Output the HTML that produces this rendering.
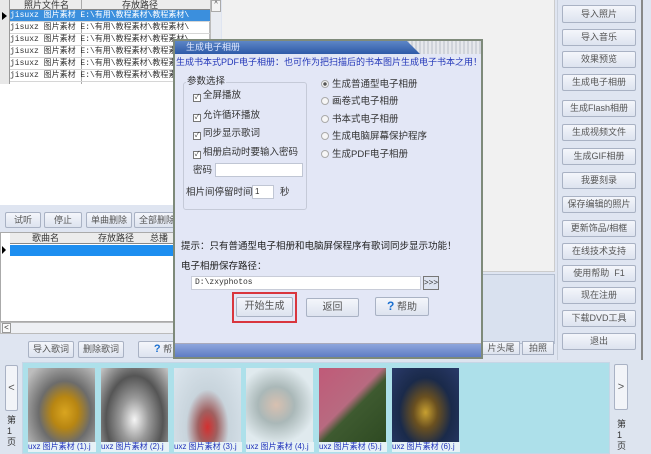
<!DOCTYPE html>
<html><head><meta charset="utf-8"><style>
*{margin:0;padding:0;box-sizing:border-box}
body{width:651px;height:454px;overflow:hidden;background:#dfe5f1;font-family:"Liberation Sans","Noto Sans CJK SC",sans-serif;font-size:9px;color:#333;position:relative}
.a{position:absolute}
.btn{position:absolute;background:linear-gradient(#f4f6fb,#dde3ef);border:1px solid #a9b2c4;border-radius:2px;text-align:center;color:#555;font-size:9px}
.row{position:absolute;left:10px;width:200px;height:12px;border-bottom:1px solid #d6d6d6;font-family:"Liberation Mono","Noto Sans CJK SC",monospace;font-size:8px;line-height:12px;color:#333;white-space:nowrap;overflow:hidden}
.cb{display:inline-block;width:8px;height:8px;border:1px solid #777;background:#fff;margin-right:2px;vertical-align:-1px;font-size:7px;line-height:6px;text-align:center}
.rd{display:inline-block;width:8px;height:8px;border:1px solid #aaa;border-radius:50%;background:#f6f6f6;margin-right:3px;vertical-align:-1px}
.th{position:absolute;top:368px;width:67px;height:74px}
.lb{position:absolute;top:442px;width:68px;height:10px;font-size:8px;color:#2233bb;line-height:10px;white-space:nowrap;overflow:hidden;background:#e6f2f6}
.d{font-size:9.5px;line-height:12px;white-space:nowrap}
</style></head><body>
<div class="a" style="left:0;top:0;width:210px;height:205px;background:#fff;border-right:1px solid #bbb"></div>
<div class="a" style="left:0;top:0;width:10px;height:84px;background:#e8e8e8;border-right:1px solid #999"></div>
<div class="a" style="left:10px;top:0;width:200px;height:10px;background:#ececec;border-bottom:1px solid #888;font-size:9px;line-height:10px;color:#333"><span class="a" style="left:14px">照片文件名</span><span class="a" style="left:112px">存放路径</span></div>
<div class="a" style="left:81px;top:0;width:1px;height:84px;background:#aaa"></div>
<div class="row" style="top:10px;background:#3b8fdd;color:#fff">jisuxz 图片素材 E:\有用\教程素材\教程素材\</div>
<div class="row" style="top:22px">jisuxz 图片素材 E:\有用\教程素材\教程素材\</div>
<div class="row" style="top:34px">jisuxz 图片素材 E:\有用\教程素材\教程素材\</div>
<div class="row" style="top:46px">jisuxz 图片素材 E:\有用\教程素材\教程素材\</div>
<div class="row" style="top:58px">jisuxz 图片素材 E:\有用\教程素材\教程素材\</div>
<div class="row" style="top:70px">jisuxz 图片素材 E:\有用\教程素材\教程素材\</div>
<div class="a" style="left:2px;top:12px;border-left:5px solid #000;border-top:4px solid transparent;border-bottom:4px solid transparent"></div>
<div class="a" style="left:210px;top:0;width:11px;height:205px;background:#e9ecf2;border-left:1px solid #bbb"></div>
<div class="a" style="left:211px;top:0;width:10px;height:12px;background:#f4f4f4;border:1px solid #aaa;font-size:7px;text-align:center">^</div>
<div class="a" style="left:222px;top:0;width:333px;height:272px;background:#f1f1f1;border-right:1px solid #ccc;border-bottom:1px solid #ccc"></div>
<div class="btn" style="left:5px;top:212px;width:36px;height:16px;line-height:14px">试听</div>
<div class="btn" style="left:44px;top:212px;width:38px;height:16px;line-height:14px">停止</div>
<div class="btn" style="left:86px;top:212px;width:46px;height:16px;line-height:14px">单曲删除</div>
<div class="btn" style="left:134px;top:212px;width:46px;height:16px;line-height:14px">全部删除</div>
<div class="a" style="left:0;top:232px;width:200px;height:90px;background:#fff;border:1px solid #aaa"></div>
<div class="a" style="left:10px;top:233px;width:190px;height:11px;background:#ececec;border-bottom:1px solid #888;line-height:11px"><span class="a" style="left:22px">歌曲名</span><span class="a" style="left:88px">存放路径</span><span class="a" style="left:140px">总播</span></div>
<div class="a" style="left:10px;top:245px;width:190px;height:11px;background:#1d8ef0"></div>
<div class="a" style="left:2px;top:246px;border-left:4px solid #000;border-top:4px solid transparent;border-bottom:4px solid transparent"></div>
<div class="a" style="left:0;top:322px;width:200px;height:12px;background:#eef0f4;border:1px solid #bbb"></div>
<div class="a" style="left:2px;top:323px;width:9px;height:10px;background:#fafafa;border:1px solid #999;font-size:8px;line-height:8px;text-align:center">&lt;</div>
<div class="btn" style="left:28px;top:341px;width:46px;height:17px;line-height:15px">导入歌词</div>
<div class="btn" style="left:78px;top:341px;width:46px;height:17px;line-height:15px">删除歌词</div>
<div class="btn" style="left:138px;top:341px;width:50px;height:17px;line-height:15px"><b style="color:#1a6fd0;font-size:11px">?</b> 帮</div>
<div class="a" style="left:385px;top:274px;width:170px;height:70px;background:#d9e1ef;border:1px solid #b5bfd0"></div>
<div class="btn" style="left:482px;top:341px;width:38px;height:14px;line-height:12px;border-radius:0">片头尾</div>
<div class="btn" style="left:522px;top:341px;width:32px;height:14px;line-height:12px;border-radius:0">拍照</div>
<div class="a" style="left:557px;top:0;width:86px;height:360px;border-left:1px solid #c9d0dc;border-right:2px solid #888"></div>
<div class="btn" style="left:562px;top:5px;width:74px;height:18px;line-height:16px">导入照片</div>
<div class="btn" style="left:562px;top:29px;width:74px;height:17px;line-height:15px">导入音乐</div>
<div class="btn" style="left:562px;top:51px;width:74px;height:17px;line-height:15px">效果预览</div>
<div class="btn" style="left:562px;top:74px;width:74px;height:17px;line-height:15px">生成电子相册</div>
<div class="btn" style="left:562px;top:100px;width:74px;height:17px;line-height:15px">生成Flash相册</div>
<div class="btn" style="left:562px;top:124px;width:74px;height:17px;line-height:15px">生成视频文件</div>
<div class="btn" style="left:562px;top:148px;width:74px;height:17px;line-height:15px">生成GIF相册</div>
<div class="btn" style="left:562px;top:172px;width:74px;height:17px;line-height:15px">我要刻录</div>
<div class="btn" style="left:562px;top:196px;width:74px;height:17px;line-height:15px">保存编辑的照片</div>
<div class="btn" style="left:562px;top:220px;width:74px;height:17px;line-height:15px">更新饰品/相框</div>
<div class="btn" style="left:562px;top:243px;width:74px;height:17px;line-height:15px">在线技术支持</div>
<div class="btn" style="left:562px;top:265px;width:74px;height:17px;line-height:15px">使用帮助&nbsp; F1</div>
<div class="btn" style="left:562px;top:287px;width:74px;height:17px;line-height:15px">现在注册</div>
<div class="btn" style="left:562px;top:310px;width:74px;height:17px;line-height:15px">下载DVD工具</div>
<div class="btn" style="left:562px;top:333px;width:74px;height:17px;line-height:15px">退出</div>
<div class="a" style="left:0;top:360px;width:651px;height:94px;background:#dde4ef"></div>
<div class="a" style="left:22px;top:362px;width:588px;height:92px;background:#ade0ea;border:1px solid #c6d6e6"></div>
<div class="btn" style="left:5px;top:365px;width:13px;height:46px;line-height:44px;font-size:11px;background:#f2f4f8">&lt;</div>
<div class="a" style="left:7px;top:415px;width:10px;font-size:9px;line-height:11px">第<br>1<br>页</div>
<div class="btn" style="left:614px;top:364px;width:14px;height:46px;line-height:44px;font-size:11px;background:#f2f4f8">&gt;</div>
<div class="a" style="left:617px;top:419px;width:10px;font-size:9px;line-height:11px">第<br>1<br>页</div>
<div class="th" style="left:28px;background:radial-gradient(ellipse at 55% 60%,#d9a520 0,#b88612 25%,#6c6c6c 50%,#bdbdbd 90%)"></div>
<div class="th" style="left:101px;background:radial-gradient(ellipse at 50% 70%,#f5f5f5 0,#999 30%,#555 60%,#c8c8c8 100%)"></div>
<div class="th" style="left:174px;background:radial-gradient(ellipse at 50% 80%,#d33030 0,#a06060 20%,#c8d4dc 45%,#dce6ee 100%)"></div>
<div class="th" style="left:246px;background:radial-gradient(ellipse at 45% 50%,#d8c0b0 0,#aab8b8 35%,#e0eaee 75%)"></div>
<div class="th" style="left:319px;background:linear-gradient(135deg,#c05a78 0,#b86a80 45%,#3e5a30 55%,#2e4a22 100%)"></div>
<div class="th" style="left:392px;background:radial-gradient(ellipse at 50% 60%,#c8a030 0,#6a5020 25%,#1a2a4a 55%,#2a3a6a 100%)"></div>
<div class="lb" style="left:28px">uxz 图片素材 (1).j</div>
<div class="lb" style="left:101px">uxz 图片素材 (2).j</div>
<div class="lb" style="left:174px">uxz 图片素材 (3).j</div>
<div class="lb" style="left:246px">uxz 图片素材 (4).j</div>
<div class="lb" style="left:319px">uxz 图片素材 (5).j</div>
<div class="lb" style="left:392px">uxz 图片素材 (6).j</div>
<div class="a" style="left:173px;top:39px;width:310px;height:320px;background:#e3e7f6;border:2px solid #7e8a7a"></div>
<div class="a" style="left:175px;top:41px;width:306px;height:13px;background:repeating-linear-gradient(90deg,#cfd3da 0 2px,#e6e8ec 2px 4px)"></div>
<div class="a" style="left:175px;top:41px;width:245px;height:13px;background:linear-gradient(#5d86c6,#2e5aa8);clip-path:polygon(0 0,232px 0,245px 100%,0 100%)"></div>
<div class="a" style="left:186px;top:42px;color:#dfe8ff;font-size:9px;line-height:11px">生成电子相册</div>
<div class="a" style="left:176px;top:56px;color:#2236b8;font-size:9px;line-height:12px;white-space:nowrap">生成书本式PDF电子相册：也可作为把扫描后的书本图片生成电子书本之用！</div>
<div class="a" style="left:183px;top:82px;width:124px;height:128px;border:1px solid #c5cad8;border-radius:3px"></div>
<div class="a d" style="left:186px;top:76px;background:#e3e7f6;padding:0 1px">参数选择</div>
<div class="a d" style="left:193px;top:90px"><span class="cb">✓</span>全屏播放</div>
<div class="a d" style="left:193px;top:110px"><span class="cb">✓</span>允许循环播放</div>
<div class="a d" style="left:193px;top:128px"><span class="cb">✓</span>同步显示歌词</div>
<div class="a d" style="left:193px;top:147px"><span class="cb">✓</span>相册启动时要输入密码</div>
<div class="a d" style="left:193px;top:165px">密码</div>
<div class="a" style="left:215px;top:163px;width:88px;height:14px;background:#fff;border:1px solid #c0c6d4"></div>
<div class="a d" style="left:186px;top:187px">相片间停留时间</div>
<div class="a" style="left:252px;top:185px;width:22px;height:14px;background:#fff;border:1px solid #c0c6d4;font-size:8px;padding-left:2px;line-height:12px">1</div>
<div class="a d" style="left:280px;top:187px">秒</div>
<div class="a d" style="left:321px;top:79px"><span class="rd" style="background:radial-gradient(#555 0 1.5px,#f6f6f6 2px)"></span>生成普通型电子相册</div>
<div class="a d" style="left:321px;top:96px"><span class="rd"></span>画卷式电子相册</div>
<div class="a d" style="left:321px;top:114px"><span class="rd"></span>书本式电子相册</div>
<div class="a d" style="left:321px;top:131px"><span class="rd"></span>生成电脑屏幕保护程序</div>
<div class="a d" style="left:321px;top:149px"><span class="rd"></span>生成PDF电子相册</div>
<div class="a d" style="left:181px;top:241px;color:#222">提示：只有普通型电子相册和电脑屏保程序有歌词同步显示功能！</div>
<div class="a d" style="left:181px;top:261px;color:#222">电子相册保存路径：</div>
<div class="a" style="left:191px;top:276px;width:230px;height:14px;background:#fff;border:1px solid #c8ccd8;font-family:'Liberation Mono',monospace;font-size:8px;line-height:12px;padding-left:3px">D:\zxyphotos</div>
<div class="a" style="left:423px;top:276px;width:16px;height:14px;background:#dde3f0;border:1px solid #777;font-size:8px;line-height:12px;text-align:center;color:#333">&gt;&gt;&gt;</div>
<div class="a" style="left:232px;top:292px;width:65px;height:31px;border:2px solid #d9363e"></div>
<div class="btn" style="left:236px;top:297px;width:57px;height:20px;line-height:18px;font-size:10px">开始生成</div>
<div class="btn" style="left:306px;top:298px;width:53px;height:19px;line-height:17px;font-size:10px">返回</div>
<div class="btn" style="left:375px;top:297px;width:54px;height:19px;line-height:17px;font-size:10px"><b style="color:#1a6fd0;font-size:12px">?</b> 帮助</div>
<div class="a" style="left:175px;top:343px;width:306px;height:14px;background:linear-gradient(#8ea6dc,#5f7cc4);border-top:1px solid #aab"></div>
</body></html>
